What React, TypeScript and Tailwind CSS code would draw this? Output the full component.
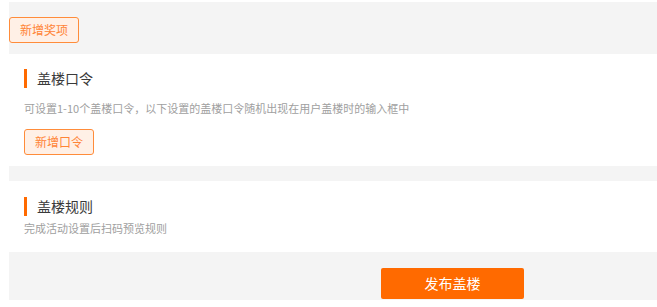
import React from "react";

const font = { fontFamily: '"Noto Sans CJK SC", "Noto Sans", sans-serif' };

const SectionTitle = ({ children }: { children: React.ReactNode }) => (
  <div className="flex items-center h-[19px]">
    <span className="w-[3px] h-full bg-[#ff6a00]" />
    <h3 className="ml-[10px] text-[14px] leading-[19px] text-[#3a3a3a]">{children}</h3>
  </div>
);

const OutlineButton = ({ children }: { children: React.ReactNode }) => (
  <button className="w-[70px] h-[26px] flex items-center justify-center rounded-[3px] border border-[#ff8c3a] bg-[#fff0e6] text-[12px] text-[#ff8436]">
    {children}
  </button>
);

export default function App() {
  return (
    <div className="w-[657px] h-[307px] bg-white overflow-hidden" style={font}>
      <div className="mt-[2px] ml-[9px] h-[52px] bg-[#f4f4f4] pt-[15px]">
        <OutlineButton>新增奖项</OutlineButton>
      </div>

      <section className="h-[112px] px-[24px] pt-[15px]">
        <SectionTitle>盖楼口令</SectionTitle>
        <p className="mt-[11px] text-[11px] leading-[18px] text-[#a0a0a0]">
          可设置1-10个盖楼口令，以下设置的盖楼口令随机出现在用户盖楼时的输入框中
        </p>
        <div className="mt-[12px]">
          <OutlineButton>新增口令</OutlineButton>
        </div>
      </section>

      <div className="ml-[9px] h-[15px] bg-[#f4f4f4]" />

      <section className="h-[71px] px-[24px] pt-[16px]">
        <SectionTitle>盖楼规则</SectionTitle>
        <p className="mt-[4px] text-[11px] leading-[16px] text-[#a0a0a0]">完成活动设置后扫码预览规则</p>
      </section>

      <div className="ml-[9px] h-[48px] bg-[#f4f4f4] pt-[16px] pl-[372px]">
        <button className="w-[143px] h-[31px] rounded-[2px] bg-[#ff6a00] text-white text-[14px]">发布盖楼</button>
      </div>
    </div>
  );
}
